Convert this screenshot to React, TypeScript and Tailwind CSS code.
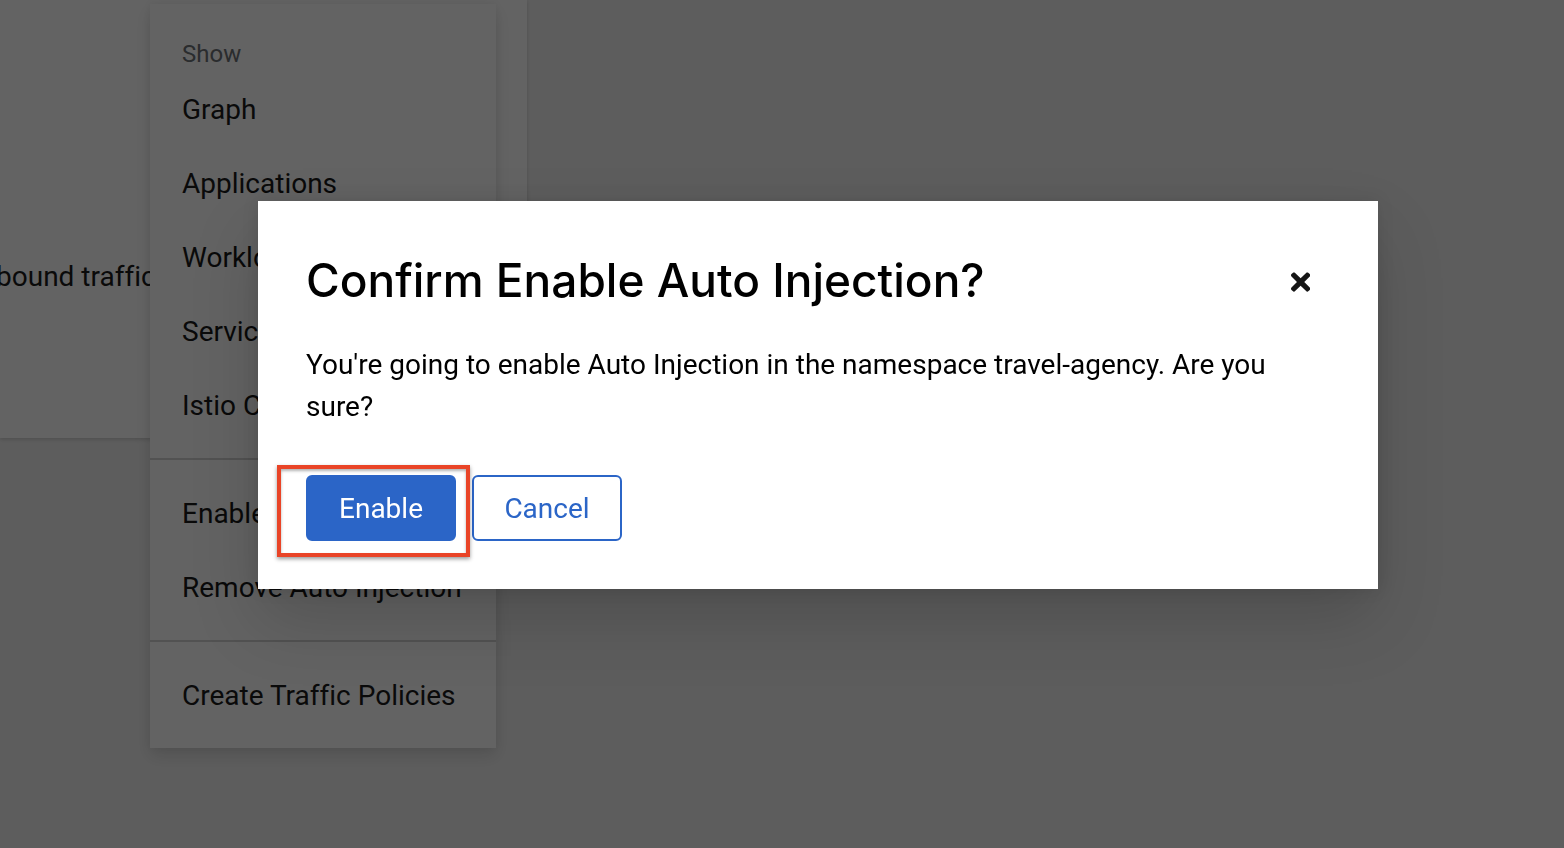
import React from "react";

const showItems = ["Graph", "Applications", "Workloads", "Services", "Istio Config"];
const injectionItems = ["Enable Auto Injection", "Remove Auto Injection"];
const policyItems = ["Create Traffic Policies"];

function MenuItem({ label }: { label: string }) {
  return (
    <li>
      <button type="button" className="block w-full px-8 pt-[17px] pb-[15px] text-left whitespace-nowrap">
        {label}
      </button>
    </li>
  );
}

function MenuGroup({ items }: { items: string[] }) {
  return (
    <ul>
      {items.map((label) => (
        <MenuItem key={label} label={label} />
      ))}
    </ul>
  );
}

function ActionsMenu() {
  return (
    <nav
      aria-label="Namespace actions"
      className="absolute top-1 left-[150px] flex w-[346px] flex-col bg-white py-4 shadow-[0_8px_16px_rgba(3,3,3,0.12),0_0_8px_rgba(3,3,3,0.06)]"
    >
      <h2 className="px-8 pt-4 text-2xl leading-9 text-[#6a6e73]">Show</h2>
      <MenuGroup items={showItems} />
      <hr className="my-4 border-t-2 border-[#d2d2d2]" />
      <MenuGroup items={injectionItems} />
      <hr className="my-4 border-t-2 border-[#d2d2d2]" />
      <MenuGroup items={policyItems} />
    </nav>
  );
}

function CloseIcon() {
  return (
    <svg viewBox="0 0 352 512" className="h-7" fill="currentColor" aria-hidden="true">
      <path d="M242.72 256l100.07-100.07c12.28-12.28 12.28-32.19 0-44.48l-22.24-22.24c-12.28-12.28-32.19-12.28-44.48 0L176 189.28 75.93 89.21c-12.28-12.28-32.19-12.28-44.48 0L9.21 111.45c-12.28 12.28-12.28 32.19 0 44.48L109.28 256 9.21 356.07c-12.28 12.28-12.28 32.19 0 44.48l22.24 22.24c12.28 12.28 32.2 12.28 44.48 0L176 322.72l100.07 100.07c12.28 12.28 32.2 12.28 44.48 0l22.24-22.24c12.28-12.28 12.28-32.19 0-44.48L242.72 256z" />
    </svg>
  );
}

function ConfirmDialog() {
  return (
    <div className="fixed inset-0 flex items-center justify-center bg-[#030303]/62 pb-[58px] pl-[72px]">
      <section
        role="dialog"
        aria-modal="true"
        aria-labelledby="dialog-title"
        aria-describedby="dialog-text"
        className="w-full max-w-[1120px] bg-white p-12 text-black shadow-[0_32px_64px_rgba(3,3,3,0.16),0_0_16px_rgba(3,3,3,0.1)]"
      >
        <header className="flex items-center justify-between">
          <h1 id="dialog-title" className="font-['Inter',sans-serif] text-[46px] leading-[62px] font-medium">
            Confirm Enable Auto Injection?
          </h1>
          <button type="button" aria-label="Close" className="flex px-5 pt-1 text-[#151515]">
            <CloseIcon />
          </button>
        </header>
        <p id="dialog-text" className="mt-[33px]">
          You're going to enable Auto Injection in the namespace travel-agency. Are you sure?
        </p>
        <footer className="mt-[47px] flex gap-4">
          <div className="relative">
            <button
              type="button"
              className="h-[66px] w-[150px] rounded-md border-2 border-[#2b65c7] bg-[#2b65c7] pt-0.5 text-white"
            >
              Enable
            </button>
            <div className="pointer-events-none absolute -top-[10px] -right-[14px] -bottom-4 -left-[29px] border-4 border-[#e94427] shadow-[0_2px_4px_rgba(0,0,0,0.4),inset_0_2px_3px_rgba(0,0,0,0.3)]" />
          </div>
          <button
            type="button"
            className="h-[66px] w-[150px] rounded-md border-2 border-[#2b65c7] pt-0.5 text-[#2b65c7]"
          >
            Cancel
          </button>
        </footer>
      </section>
    </div>
  );
}

export default function App() {
  return (
    <div className="relative min-h-screen overflow-hidden bg-[#f0f0f0] font-['Roboto',sans-serif] text-[28px] leading-[42px] text-[#151515] [font-variant-ligatures:none]">
      <main className="flex">
        <section className="h-[438px] w-[527px] bg-white pt-64 shadow-[0_2px_4px_rgba(3,3,3,0.12),0_0_4px_rgba(3,3,3,0.06)]">
          <p className="-ml-1 whitespace-nowrap">bound traffic</p>
        </section>
      </main>
      <ActionsMenu />
      <ConfirmDialog />
    </div>
  );
}
